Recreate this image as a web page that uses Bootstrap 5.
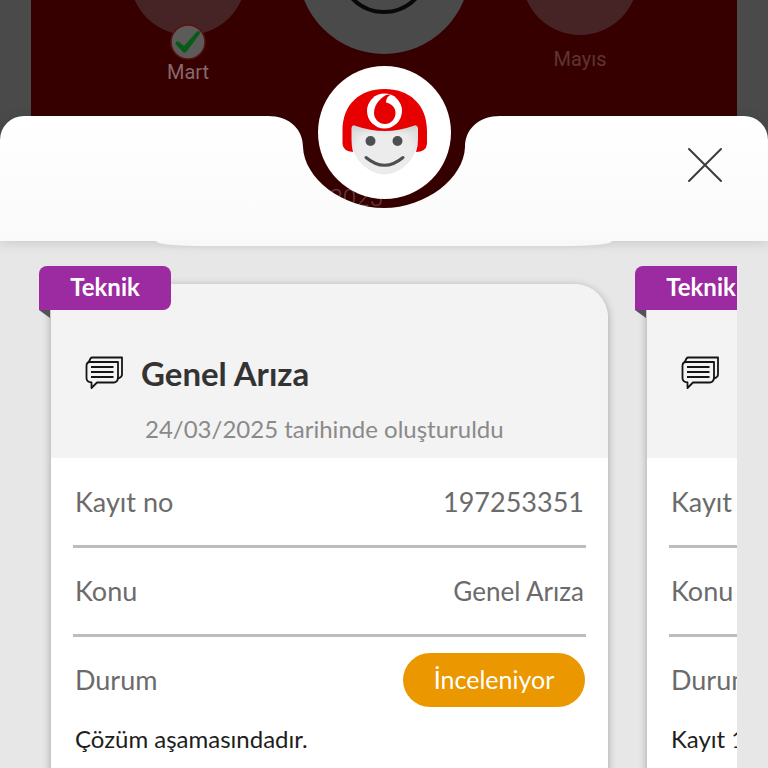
<!DOCTYPE html>
<html lang="tr">
<head>
<meta charset="utf-8">
<meta name="viewport" content="width=device-width, initial-scale=1">
<title>Kayıtlarım</title>
<link href="https://cdn.jsdelivr.net/npm/bootstrap@5.3.0/dist/css/bootstrap.min.css" rel="stylesheet">
<style>
body { font-family: Lato, "Noto Sans", sans-serif; background: #e7e7e7; color: #1e1e1e; }
.hero { display: grid; grid-template-columns: minmax(0, 1fr); }
.hero > * { grid-area: 1 / 1; }
.backdrop { background: #4a4a4a; padding: 0 31px; overflow: hidden; }
.backdrop-panel { background: #370000; font-family: Roboto, sans-serif; overflow: hidden; }
.months { display: grid; grid-template-columns: repeat(3, 196px); justify-content: center; height: 182px; }
.bubble { width: 116px; height: 116px; border-radius: 50%; background: #462426; margin-top: -81px; flex: none; }
.bubble-main { width: 172px; height: 172px; background: #4a4a4a; margin-top: -118px; padding: 40px; }
.ring { width: 92px; height: 92px; border: 4px solid #080808; border-radius: 50%; }
.tick { margin-top: -11px; }
.month-name { font-size: 20px; line-height: 24px; color: #866a6a; }
.month-next { color: #5d3434; margin-top: 12px; }
.year { font-size: 24px; line-height: 32px; font-weight: 300; color: #6b4141; padding-right: 56px; }
.sheet-head { margin-top: 116px; height: 125px; z-index: 1; filter: drop-shadow(0 2px 6px rgba(0,0,0,.13)); }
.side { background: linear-gradient(#fff, #fafafa); }
.side-start { border-top-left-radius: 24px; }
.side-end { border-top-right-radius: 24px; }
.notch { margin: 0 -1px; flex: none; }
.assistant { width: 133px; height: 133px; margin-top: 66px; z-index: 2; justify-self: center; }
.close-btn { margin: 24px 38px 0 0; }
.peek { height: 5px; margin: 0 156px; background: #f8f8f8; border-radius: 0 0 40px 40px / 0 0 5px 5px; box-shadow: 0 2px 4px rgba(0,0,0,.04); position: relative; z-index: 1; }
.track { margin: 0 31px; padding: 20px 0 0 20px; gap: 39px; overflow: hidden; }
.ticket { flex: 0 0 557px; max-width: 82vw; }
.tag { width: 132px; height: 44px; margin: 0 0 -26px -12px; padding-bottom: 2px; background: #9c2aa0; border-radius: 8px 8px 8px 0; font-size: 24px; font-weight: 700; z-index: 1; }
.tag::after { content: ""; position: absolute; left: 0; top: 100%; width: 11px; height: 8px; background: #55505a; clip-path: polygon(0 0, 100% 0, 100% 100%); }
.ticket-body { background: #fff; border-radius: 0 34px 0 0; box-shadow: 0 2px 8px rgba(0,0,0,.3); min-height: 520px; }
.ticket-head { background: #f3f3f3; height: 174px; padding: 67px 22px 0 34px; border-radius: 0 34px 0 0; }
.ticket-title { font-size: 33px; line-height: 44px; min-height: 44px; font-weight: 700; color: #333; gap: 18px; }
.ticket-date { font-size: 24px; line-height: 36px; color: #8a8a8a; margin: 16px 0 0 60px; }
.fields { padding: 1px 22px 0; }
.field { height: 89px; padding: 0 2px; border-bottom: 3px solid #bdbdbd; font-size: 27px; color: #6b6b6b; }
.field-last { border: 0; height: 86px; }
.field-small { font-size: 26px; }
.state { width: 182px; height: 54px; margin-right: -1px; background: #eb9700; font-size: 25px; }
.note { font-size: 24px; line-height: 32px; padding: 0 2px; }
</style>
<script src="https://cdn.jsdelivr.net/npm/bootstrap@5.3.0/dist/js/bootstrap.bundle.min.js"></script>
</head>
<body>
<svg class="d-none" aria-hidden="true">
  <symbol id="chat" viewBox="0 0 38 34">
    <g fill="none" stroke="#151515" stroke-width="1.8" stroke-linejoin="round">
      <path d="M3.500 6.500 5.500 2.500Q6 1.500 7.500 1.500H37V18.500Q37 21.500 32.500 22.500"/>
      <path d="M5 6H33V21Q33 26 29 26.500H12L6.500 32V26.500Q1.500 26 1.500 22V10Q1.500 6 5 6Z"/>
      <path d="M6 11H28.500M6 16H28.500M6 21H28.500"/>
    </g>
  </symbol>
</svg>
<div class="vh-100 overflow-hidden">
  <header class="hero">
    <div class="backdrop">
      <div class="backdrop-panel h-100">
        <div class="months">
          <div class="d-flex flex-column align-items-center">
            <div class="bubble"></div>
            <svg class="tick flex-shrink-0" width="36" height="36" viewBox="0 0 36 36" aria-hidden="true"><circle cx="18" cy="18" r="17" fill="#5c5b59" stroke="#5a1210" stroke-width="1.500"/><path d="M5.500 20Q6 16 9 18L14 22 27 7.500Q30 6 30 9.500L17 27Q14.500 30.500 12 27Z" fill="#075a17"/></svg>
            <div class="month-name">Mart</div>
          </div>
          <div class="d-flex flex-column align-items-center"><div class="bubble bubble-main"><div class="ring"></div></div></div>
          <div class="d-flex flex-column align-items-center">
            <div class="bubble"></div>
            <div class="month-name month-next">Mayıs</div>
          </div>
        </div>
        <div class="year text-center">2025</div>
      </div>
    </div>
    <div class="sheet-head d-flex">
      <div class="side side-start flex-fill w-50"></div>
      <svg class="notch" width="242" height="125" viewBox="-1 0 242 125" aria-hidden="true">
        <defs><linearGradient id="sheet" x1="0" y1="0" x2="0" y2="125" gradientUnits="userSpaceOnUse"><stop stop-color="#fff"/><stop offset="1" stop-color="#fafafa"/></linearGradient></defs>
        <path fill="url(#sheet)" d="M-1 0H4C25 0 39 13 39 31C40 62 78 92 120 92C162 92 200 62 201 31C201 13 215 0 236 0H241V125H-1Z"/>
      </svg>
      <div class="side side-end flex-fill w-50 d-flex justify-content-end align-items-start">
        <button type="button" class="btn p-1 border-0 close-btn lh-1" aria-label="Kapat">
          <svg class="d-block" width="42" height="42" viewBox="0 0 42 42"><path d="M5 5 37 37M37 5 5 37" stroke="#3c3c3c" stroke-width="2" stroke-linecap="round"/></svg>
        </button>
      </div>
    </div>
    <svg class="assistant" viewBox="0 0 133 133" role="img" aria-label="Asistan">
      <defs>
        <radialGradient id="face" cx=".5" cy=".55" r=".55"><stop offset=".75" stop-color="#ececec"/><stop offset="1" stop-color="#dfdfdf"/></radialGradient>
        <linearGradient id="shade" x1="0" y1="0" x2="0" y2="1"><stop stop-color="#b8c0c0"/><stop offset="1" stop-color="#ececec" stop-opacity="0"/></linearGradient>
      </defs>
      <circle cx="66.500" cy="66.500" r="66.500" fill="#fff"/>
      <path d="M33 56H100V73Q99 90 87 100Q78 108 66.500 108.500Q55 108 46 100Q34 90 33 73Z" fill="url(#face)"/>
      <path d="M34 57Q66 69 99 57V66Q66 76 34 66Z" fill="url(#shade)"/>
      <path d="M24.500 65C24.500 38 42 23 66.500 23S109 38 109 65V78Q108 86 98 86Q100 80 100 73V62Q99 58 95 60Q67 70 38 60Q34 58 33.500 62V73Q33.500 80 35 86Q25 85 24.500 78Z" fill="#e60000"/>
      <circle cx="66.500" cy="45" r="17.500" fill="#fff"/>
      <path d="M70 28.500C64 30 56 38 56 47C56 53 61 58 67 58C73 58 77.500 53 77.500 47C77.500 41 73 37.500 68 36.500C68 33 69.500 30 73 28.800Z" fill="#e60000"/>
      <circle cx="52.500" cy="75" r="5" fill="#4d5052"/><circle cx="79.500" cy="75" r="5" fill="#4d5052"/>
      <path d="M48 91.500Q66.500 107 85 91.500" fill="none" stroke="#4d5052" stroke-width="3" stroke-linecap="round"/>
    </svg>
  </header>
  <div class="peek"></div>
  <main class="track d-flex">
    <article class="ticket">
      <div class="tag position-relative d-flex align-items-center justify-content-center text-white">Teknik</div>
      <div class="ticket-body">
        <div class="ticket-head">
          <h2 class="ticket-title d-flex align-items-center m-0"><svg class="flex-shrink-0" width="38" height="34" aria-hidden="true"><use href="#chat"/></svg>Genel Arıza</h2>
          <div class="ticket-date text-nowrap">24/03/2025 tarihinde oluşturuldu</div>
        </div>
        <div class="fields">
          <div class="field d-flex align-items-center justify-content-between"><span>Kayıt no</span><span>197253351</span></div>
          <div class="field d-flex align-items-center justify-content-between"><span>Konu</span><span class="field-small">Genel Arıza</span></div>
          <div class="field field-last d-flex align-items-center justify-content-between"><span>Durum</span><span class="state rounded-pill text-white d-flex align-items-center justify-content-center">İnceleniyor</span></div>
          <p class="note m-0">Çözüm aşamasındadır.</p>
        </div>
      </div>
    </article>
    <article class="ticket">
      <div class="tag position-relative d-flex align-items-center justify-content-center text-white">Teknik</div>
      <div class="ticket-body">
        <div class="ticket-head">
          <h2 class="ticket-title d-flex align-items-center m-0"><svg class="flex-shrink-0" width="38" height="34" aria-hidden="true"><use href="#chat"/></svg></h2>
        </div>
        <div class="fields">
          <div class="field d-flex align-items-center"><span>Kayıt</span></div>
          <div class="field d-flex align-items-center"><span>Konu</span></div>
          <div class="field field-last d-flex align-items-center"><span>Durum</span></div>
          <p class="note m-0">Kayıt 1</p>
        </div>
      </div>
    </article>
  </main>
</div>
</body>
</html>
